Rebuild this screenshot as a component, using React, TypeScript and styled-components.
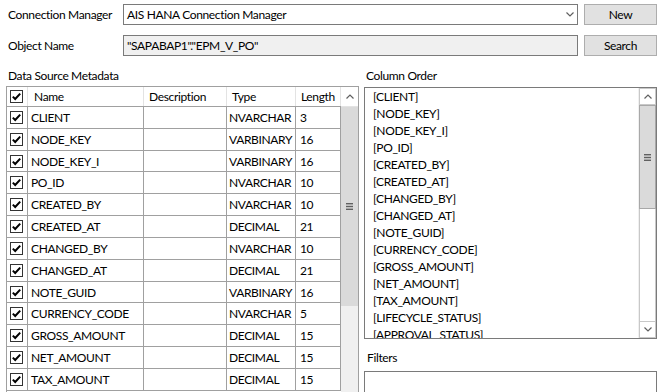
import React from 'react';
import styled, { createGlobalStyle } from 'styled-components';

const FONT = `Lato, 'Liberation Sans', sans-serif`;

const GlobalStyle = createGlobalStyle`
  html, body {
    margin: 0;
    padding: 0;
    background: #ffffff;
  }
  body {
    font-family: ${FONT};
    font-size: 12px;
    letter-spacing: -0.35px;
    color: #000000;
  }
`;

const Window = styled.div`
  width: 657px;
  height: 392px;
  overflow: hidden;
  box-sizing: border-box;
  padding: 4px 0 0 6px;
  background: #ffffff;
  display: flex;
  flex-direction: column;
`;

const FormRow = styled.div`
  display: grid;
  grid-template-columns: 111px 455px 73px;
  column-gap: 6px;
  height: 21px;
  margin-bottom: 10px;
  align-items: center;
`;

const FieldLabel = styled.div`
  padding-left: 2px;
  line-height: 21px;
  white-space: nowrap;
`;

const TextField = styled.div<{ $readOnly?: boolean }>`
  height: 21px;
  box-sizing: border-box;
  border: 1px solid #7a7a7a;
  background: ${({ $readOnly }) => ($readOnly ? '#f0f0f0' : '#ffffff')};
  padding-left: 3px;
  line-height: 19px;
  white-space: nowrap;
  display: flex;
  align-items: center;
  justify-content: space-between;
`;

const ComboArrow = styled.svg`
  margin-right: 3px;
`;

const Button = styled.div`
  height: 21px;
  box-sizing: border-box;
  border: 1px solid #adadad;
  background: #e1e1e1;
  text-align: center;
  line-height: 19px;
`;

const Body = styled.div`
  display: flex;
  gap: 5px;
  margin-top: 2px;
`;

const LeftPanel = styled.div`
  width: 353px;
  flex: none;
  display: flex;
  flex-direction: column;
`;

const RightPanel = styled.div`
  width: 293px;
  flex: none;
  display: flex;
  flex-direction: column;
`;

const SectionLabel = styled.div<{ $indent?: number }>`
  height: 16px;
  line-height: 16px;
  padding-left: ${({ $indent }) => $indent ?? 2}px;
  white-space: nowrap;
`;

const GridFrame = styled.div`
  margin-top: 2px;
  border: 1px solid #a0a0a0;
  display: flex;
  height: 320px;
  overflow: hidden;
  background: #ffffff;
`;

const GridTable = styled.div`
  width: 334px;
  flex: none;
`;

const COLS = '21px 116px 83px 69px 45px';

const HeaderRow = styled.div`
  display: grid;
  grid-template-columns: ${COLS};
  height: 20px;
  box-sizing: border-box;
  border-bottom: 1px solid #a0a0a0;
`;

const HeaderCell = styled.div<{ $pad?: number }>`
  box-sizing: border-box;
  border-right: 1px solid #e3e3e3;
  padding-left: ${({ $pad }) => $pad ?? 5}px;
  line-height: 19px;
  display: flex;
  align-items: center;
  white-space: nowrap;
`;

const DataRow = styled.div`
  display: grid;
  grid-template-columns: ${COLS};
  height: 21.83px;
  box-sizing: border-box;
  border-bottom: 1px solid #a0a0a0;
`;

const DataCell = styled.div<{ $pad?: number }>`
  box-sizing: border-box;
  border-right: 1px solid #a0a0a0;
  padding-left: ${({ $pad }) => $pad ?? 3}px;
  display: flex;
  align-items: center;
  white-space: nowrap;
  overflow: hidden;
`;

const GridScroll = styled.div`
  width: 17px;
  flex: none;
  display: flex;
  flex-direction: column;
  background: #f0f0f0;
`;

const GridArrowBox = styled.div`
  height: 20px;
  flex: none;
  background: #ffffff;
  border-bottom: 1px solid #e3e3e3;
  box-sizing: border-box;
  display: flex;
  align-items: center;
  justify-content: center;
`;

const GridThumb = styled.div`
  height: 199px;
  flex: none;
  background: #dadada;
  display: flex;
  align-items: center;
  justify-content: center;
`;

const ListBox = styled.div`
  margin-top: 3px;
  height: 252px;
  box-sizing: border-box;
  border: 1px solid #7a7a7a;
  display: flex;
  background: #ffffff;
`;

const ListItems = styled.div`
  flex: 1;
  overflow: hidden;
  padding-left: 8px;
`;

const ListItem = styled.div`
  height: 17px;
  line-height: 17px;
  white-space: nowrap;
`;

const ListScroll = styled.div`
  width: 17px;
  flex: none;
  display: flex;
  flex-direction: column;
  background: #f0f0f0;
  border-left: 1px solid #f0f0f0;
`;

const ScrollButton = styled.div`
  height: 17px;
  flex: none;
  box-sizing: border-box;
  border: 1px solid #c8c8c8;
  background: #ffffff;
  display: flex;
  align-items: center;
  justify-content: center;
`;

const ListThumb = styled.div`
  height: 104px;
  flex: none;
  box-sizing: border-box;
  border: 1px solid #a8a8a8;
  background: #dadada;
  display: flex;
  align-items: center;
  justify-content: center;
`;

const ScrollTrack = styled.div`
  flex: 1;
  background: #ffffff;
  border-left: 1px solid #c8c8c8;
  border-right: 1px solid #c8c8c8;
`;

const FiltersLabel = styled(SectionLabel)`
  margin-top: 11px;
`;

const FiltersBox = styled.div`
  margin-top: 5px;
  height: 40px;
  border: 1px solid #7a7a7a;
  background: #ffffff;
`;

function CheckBox() {
  return (
    <svg width="13" height="13" viewBox="0 0 13 13">
      <rect x="0.5" y="0.5" width="12" height="12" fill="#ffffff" stroke="#333333" />
      <path d="M2.8 6.6 L5.2 9 L10.2 3.6" fill="none" stroke="#000000" strokeWidth="2" />
    </svg>
  );
}

function Chevron({ up = false }: { up?: boolean }) {
  return (
    <svg width="8" height="5" viewBox="0 0 8 5">
      <path
        d={up ? 'M0.5 4.5 L4 1 L7.5 4.5' : 'M0.5 0.5 L4 4 L7.5 0.5'}
        fill="none"
        stroke="#606060"
        strokeWidth="1.2"
      />
    </svg>
  );
}

function Grip() {
  return (
    <svg width="7" height="7" viewBox="0 0 7 7">
      <rect x="0" y="0" width="7" height="1.4" fill="#606060" />
      <rect x="0" y="2.8" width="7" height="1.4" fill="#606060" />
      <rect x="0" y="5.6" width="7" height="1.4" fill="#606060" />
    </svg>
  );
}

const metadata = [
  { name: 'CLIENT', type: 'NVARCHAR', length: '3' },
  { name: 'NODE_KEY', type: 'VARBINARY', length: '16' },
  { name: 'NODE_KEY_I', type: 'VARBINARY', length: '16' },
  { name: 'PO_ID', type: 'NVARCHAR', length: '10' },
  { name: 'CREATED_BY', type: 'NVARCHAR', length: '10' },
  { name: 'CREATED_AT', type: 'DECIMAL', length: '21' },
  { name: 'CHANGED_BY', type: 'NVARCHAR', length: '10' },
  { name: 'CHANGED_AT', type: 'DECIMAL', length: '21' },
  { name: 'NOTE_GUID', type: 'VARBINARY', length: '16' },
  { name: 'CURRENCY_CODE', type: 'NVARCHAR', length: '5' },
  { name: 'GROSS_AMOUNT', type: 'DECIMAL', length: '15' },
  { name: 'NET_AMOUNT', type: 'DECIMAL', length: '15' },
  { name: 'TAX_AMOUNT', type: 'DECIMAL', length: '15' },
];

const columnOrder = [
  'CLIENT',
  'NODE_KEY',
  'NODE_KEY_I',
  'PO_ID',
  'CREATED_BY',
  'CREATED_AT',
  'CHANGED_BY',
  'CHANGED_AT',
  'NOTE_GUID',
  'CURRENCY_CODE',
  'GROSS_AMOUNT',
  'NET_AMOUNT',
  'TAX_AMOUNT',
  'LIFECYCLE_STATUS',
  'APPROVAL_STATUS',
];

function App() {
  return (
    <>
      <GlobalStyle />
      <Window>
        <FormRow>
          <FieldLabel>Connection Manager</FieldLabel>
          <TextField>
            <span>AIS HANA Connection Manager</span>
            <ComboArrow width="8" height="5" viewBox="0 0 8 5">
              <path d="M0.5 0.5 L4 4 L7.5 0.5" fill="none" stroke="#606060" strokeWidth="1.2" />
            </ComboArrow>
          </TextField>
          <Button>New</Button>
        </FormRow>
        <FormRow>
          <FieldLabel>Object Name</FieldLabel>
          <TextField $readOnly>
            <span>"SAPABAP1"."EPM_V_PO"</span>
          </TextField>
          <Button>Search</Button>
        </FormRow>

        <Body>
          <LeftPanel>
            <SectionLabel>Data Source Metadata</SectionLabel>
            <GridFrame>
              <GridTable>
                <HeaderRow>
                  <HeaderCell $pad={3}>
                    <CheckBox />
                  </HeaderCell>
                  <HeaderCell $pad={6}>Name</HeaderCell>
                  <HeaderCell>Description</HeaderCell>
                  <HeaderCell>Type</HeaderCell>
                  <HeaderCell>Length</HeaderCell>
                </HeaderRow>
                {metadata.map((row) => (
                  <DataRow key={row.name}>
                    <DataCell $pad={3}>
                      <CheckBox />
                    </DataCell>
                    <DataCell>{row.name}</DataCell>
                    <DataCell />
                    <DataCell $pad={2}>{row.type}</DataCell>
                    <DataCell $pad={4}>{row.length}</DataCell>
                  </DataRow>
                ))}
              </GridTable>
              <GridScroll>
                <GridArrowBox>
                  <Chevron up />
                </GridArrowBox>
                <GridThumb>
                  <Grip />
                </GridThumb>
              </GridScroll>
            </GridFrame>
          </LeftPanel>

          <RightPanel>
            <SectionLabel>Column Order</SectionLabel>
            <ListBox>
              <ListItems>
                {columnOrder.map((c) => (
                  <ListItem key={c}>[{c}]</ListItem>
                ))}
              </ListItems>
              <ListScroll>
                <ScrollButton>
                  <Chevron up />
                </ScrollButton>
                <ListThumb>
                  <Grip />
                </ListThumb>
                <ScrollTrack />
                <ScrollButton>
                  <Chevron />
                </ScrollButton>
              </ListScroll>
            </ListBox>
            <FiltersLabel $indent={3}>Filters</FiltersLabel>
            <FiltersBox />
          </RightPanel>
        </Body>
      </Window>
    </>
  );
}

export default App;
